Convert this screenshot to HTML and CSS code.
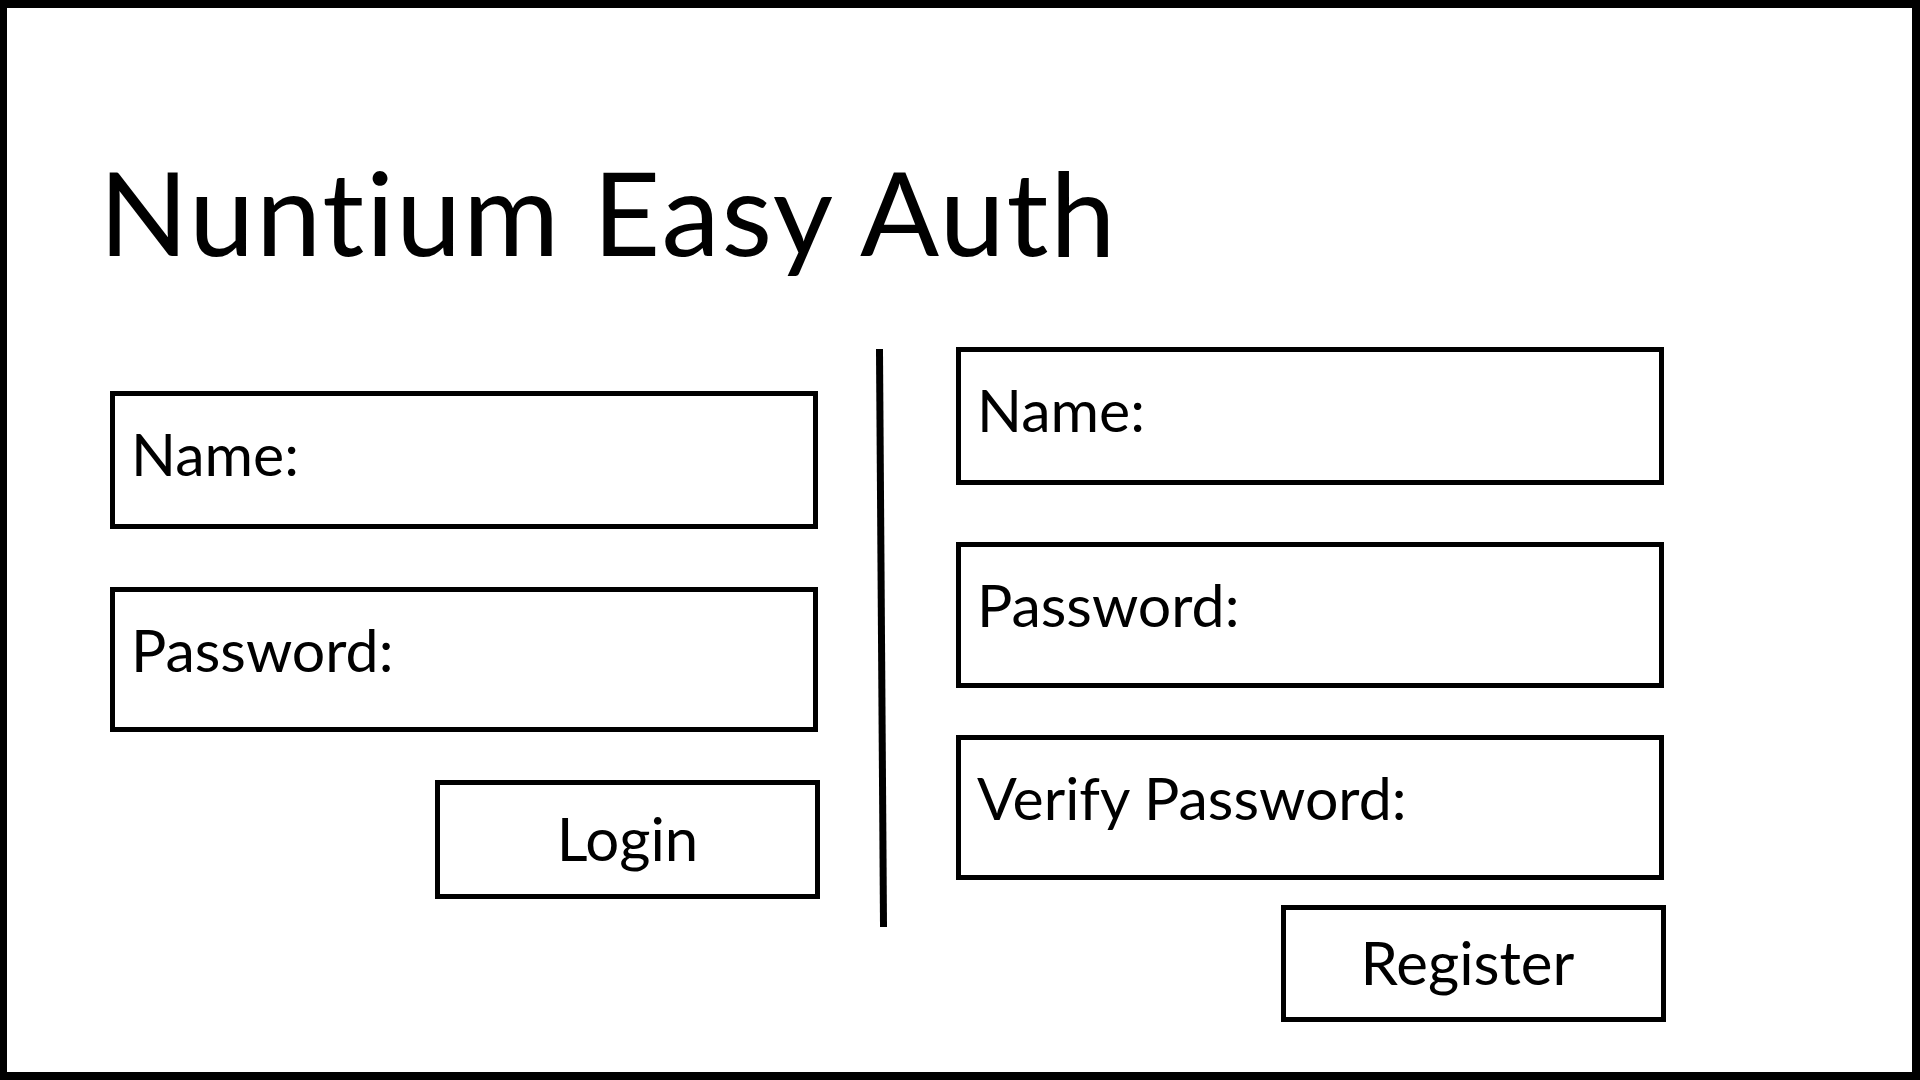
FILE: index.html
```html
<!DOCTYPE html>
<html lang="en">
<head>
    <meta charset="UTF-8">
    <meta name="viewport" content="width=device-width, initial-scale=1.0">
    <title>Nuntium Easy Auth</title>
    <link rel="stylesheet" href="styles.css">
</head>
<body>
    <!-- Header -->
    <h1 class="title">Nuntium Easy Auth</h1>

    <main class="forms">
        <!-- Login -->
        <form class="form login-form">
            <div class="field field-short">Name:</div>
            <div class="field">Password:</div>
            <button type="button" class="btn">Login</button>
        </form>

        <div class="divider"></div>

        <!-- Register -->
        <form class="form register-form">
            <div class="field field-short">Name:</div>
            <div class="field field-tall">Password:</div>
            <div class="field">Verify Password:</div>
            <button type="button" class="btn btn-register">Register</button>
        </form>
    </main>
</body>
</html>
```

FILE: styles.css
```css
/* Global Styles */
* {
    box-sizing: border-box;
}
html, body {
    margin: 0;
    padding: 0;
}
body {
    width: 1920px;
    height: 1080px;
    border: 8px solid #000;
    border-left-width: 7px;
    background-color: #fff;
    color: #000;
    font-family: Lato, "Open Sans", sans-serif;
    font-variant-ligatures: none;
    padding: 0 0 0 92px;
}

/* Header */
.title {
    font-size: 117px;
    font-weight: normal;
    line-height: 116px;
    letter-spacing: 1.8px;
    margin: 145px 0 0;
}

/* Forms */
.forms {
    display: flex;
    margin-top: 78px;
    padding-left: 11px;
}
.form {
    display: flex;
    flex-direction: column;
    width: 708px;
}
.login-form {
    margin-top: 44px;
}
.field {
    height: 145px;
    border: 5px solid #000;
    font-size: 59px;
    line-height: 58px;
    padding: 29px 0 0 16px;
    margin-bottom: 48px;
}
.field-short {
    height: 138px;
    margin-bottom: 58px;
}
.btn {
    align-self: flex-end;
    width: 385px;
    height: 119px;
    margin-right: -2px;
    border: 5px solid #000;
    border-radius: 0;
    background: #fff;
    color: #000;
    font-family: Lato, "Open Sans", sans-serif;
    font-size: 60px;
    line-height: 58px;
    padding: 0 0 4px;
    cursor: pointer;
}
.register-form .field {
    margin-bottom: 47px;
}
.register-form .field-short {
    margin-bottom: 57px;
}
.register-form .field-tall {
    height: 146px;
}
.register-form .field:last-of-type {
    margin-bottom: 25px;
}
.btn-register {
    height: 117px;
    padding: 0 12px 4px 0;
}

/* Divider between the two forms */
.divider {
    width: 7px;
    height: 578px;
    margin: 2px 71px 0 60px;
    background: #000;
    transform: rotate(-0.4deg);
}
```
